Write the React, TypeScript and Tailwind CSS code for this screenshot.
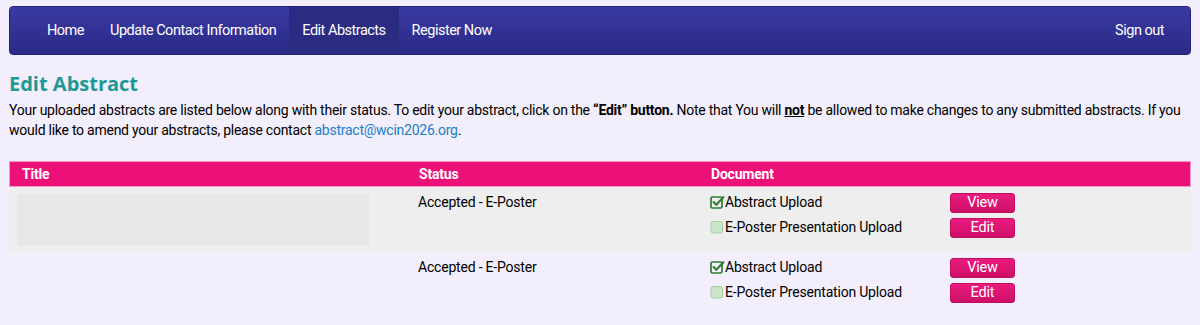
const navItems = ['Home', 'Update Contact Information', 'Edit Abstracts', 'Register Now'];

interface Row {
  status: string;
  placeholder: boolean;
}

const rows: Row[] = [
  { status: 'Accepted - E-Poster', placeholder: true },
  { status: 'Accepted - E-Poster', placeholder: false },
];

function CheckedBox() {
  return (
    <svg width="15" height="14" viewBox="0 0 15 14" className="shrink-0">
      <rect x="1" y="2" width="11" height="11" rx="1.5" fill="none" stroke="#2f7d32" strokeWidth="1.7" />
      <path d="M3.6 7 L6.3 9.8 L13.4 2.2" fill="none" stroke="#2f7d32" strokeWidth="2.1" strokeLinecap="round" strokeLinejoin="round" />
    </svg>
  );
}

function EmptyBox() {
  return (
    <svg width="15" height="14" viewBox="0 0 15 14" className="shrink-0">
      <rect x="1" y="1.5" width="11.5" height="11.5" rx="2" fill="#cce5c9" stroke="#a6cda2" strokeWidth="1" />
    </svg>
  );
}

function PinkButton({ label }: { label: string }) {
  return (
    <button className="w-[65px] h-5 rounded-[3px] border border-[#c20d5f] bg-gradient-to-b from-[#ec1a80] to-[#cc0f67] text-white text-[14.5px] tracking-[-0.2px] leading-none flex items-center justify-center">
      {label}
    </button>
  );
}

export default function App() {
  return (
    <div className="min-h-[325px] bg-[#f3eefb] px-[9px] pt-[6px] font-['Roboto',sans-serif] text-black">
      {/* navbar */}
      <nav className="h-[49px] rounded-[4px] border border-[#23237a] bg-gradient-to-b from-[#3a3aa3] to-[#2a2a87] flex items-stretch justify-between pl-[24px] pr-[13px]">
        <div className="flex items-stretch">
          {navItems.map((item) => (
            <a
              key={item}
              className={`flex items-center px-[13px] text-white text-[14.5px] tracking-[-0.5px] ${item === 'Edit Abstracts' ? 'bg-[#2b2b82]' : ''}`}
            >
              {item}
            </a>
          ))}
        </div>
        <a className="flex items-center px-[13px] text-white text-[14.5px] tracking-[-0.5px]">Sign out</a>
      </nav>

      {/* heading and intro */}
      <h1 className="mt-[16px] font-['Open_Sans',sans-serif] font-bold text-[20px] leading-[26px] text-[#1c9994]">
        Edit Abstract
      </h1>
      <p className="mt-[3px] text-[14px] leading-[20px] tracking-[-0.25px]">
        Your uploaded abstracts are listed below along with their status. To edit your abstract, click on the{' '}
        <b>“Edit” button.</b> Note that You will <b className="underline">not</b> be allowed to make changes to any
        submitted abstracts. If you would like to amend your abstracts, please contact{' '}
        <a className="text-[#1b7fc4]">abstract@wcin2026.org</a>.
      </p>

      {/* table */}
      <div className="mt-[21px] text-[14px] tracking-[-0.2px]">
        <div className="grid grid-cols-[397px_292px_1fr] h-[26px] items-center bg-[#ec1079] border border-[#f39ac4] text-white font-bold">
          <div className="px-3">Title</div>
          <div className="px-3">Status</div>
          <div className="px-3">Document</div>
        </div>
        {rows.map((row, i) => (
          <div
            key={i}
            className={`grid grid-cols-[397px_292px_1fr] ${i % 2 === 0 ? 'bg-[#eeeeee]' : ''}`}
          >
            <div className="px-2 py-[7px]">
              {row.placeholder ? <div className="w-[352px] h-[51px] bg-[#e7e7e7]" /> : <div className="h-[51px]" />}
            </div>
            <div className="px-3 pt-[5px] leading-5">{row.status}</div>
            <div className="px-3 pt-[6px] flex flex-col gap-[5px]">
              <div className="flex items-center h-5">
                <div className="w-[240px] flex items-center -mt-[2px]">
                  <CheckedBox />
                  <span>Abstract Upload</span>
                </div>
                <PinkButton label="View" />
              </div>
              <div className="flex items-center h-5">
                <div className="w-[240px] flex items-center -mt-[2px]">
                  <EmptyBox />
                  <span>E-Poster Presentation Upload</span>
                </div>
                <PinkButton label="Edit" />
              </div>
            </div>
          </div>
        ))}
      </div>
    </div>
  );
}
